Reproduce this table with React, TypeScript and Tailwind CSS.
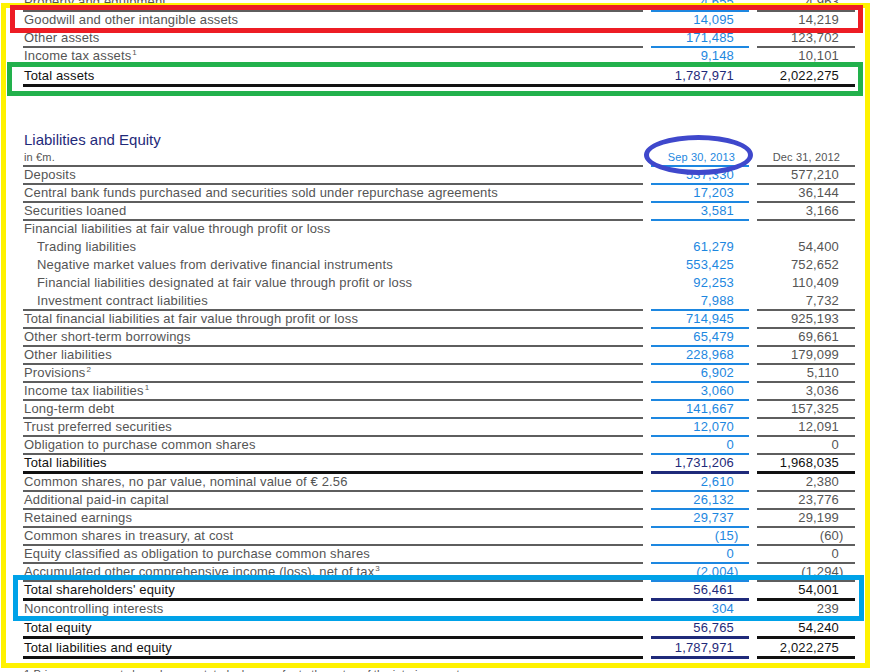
type Line = "none" | "thin" | "thick";

type Row = {
  label: string;
  sup?: string;
  a?: string;
  b?: string;
  total?: boolean;
  sub?: boolean;
  line?: Line;
  pt?: boolean;
};

const assetRows: Row[] = [
  { label: "Property and equipment", a: "4,655", b: "4,963" },
  { label: "Goodwill and other intangible assets", a: "14,095", b: "14,219" },
  { label: "Other assets", a: "171,485", b: "123,702" },
  { label: "Income tax assets", sup: "1", a: "9,148", b: "10,101" },
];

const liabilityRows: Row[] = [
  { label: "Deposits", a: "537,330", b: "577,210" },
  {
    label: "Central bank funds purchased and securities sold under repurchase agreements",
    a: "17,203",
    b: "36,144",
  },
  { label: "Securities loaned", a: "3,581", b: "3,166" },
  { label: "Financial liabilities at fair value through profit or loss", line: "none" },
  { label: "Trading liabilities", a: "61,279", b: "54,400", sub: true, line: "none" },
  {
    label: "Negative market values from derivative financial instruments",
    a: "553,425",
    b: "752,652",
    sub: true,
    line: "none",
  },
  {
    label: "Financial liabilities designated at fair value through profit or loss",
    a: "92,253",
    b: "110,409",
    sub: true,
    line: "none",
  },
  { label: "Investment contract liabilities", a: "7,988", b: "7,732", sub: true },
  { label: "Total financial liabilities at fair value through profit or loss", a: "714,945", b: "925,193" },
  { label: "Other short-term borrowings", a: "65,479", b: "69,661" },
  { label: "Other liabilities", a: "228,968", b: "179,099" },
  { label: "Provisions", sup: "2", a: "6,902", b: "5,110" },
  { label: "Income tax liabilities", sup: "1", a: "3,060", b: "3,036" },
  { label: "Long-term debt", a: "141,667", b: "157,325" },
  { label: "Trust preferred securities", a: "12,070", b: "12,091" },
  { label: "Obligation to purchase common shares", a: "0", b: "0" },
  { label: "Total liabilities", a: "1,731,206", b: "1,968,035", total: true, line: "thick" },
  { label: "Common shares, no par value, nominal value of € 2.56", a: "2,610", b: "2,380" },
  { label: "Additional paid-in capital", a: "26,132", b: "23,776" },
  { label: "Retained earnings", a: "29,737", b: "29,199" },
  { label: "Common shares in treasury, at cost", a: "(15)", b: "(60)" },
  { label: "Equity classified as obligation to purchase common shares", a: "0", b: "0" },
  {
    label: "Accumulated other comprehensive income (loss), net of tax",
    sup: "3",
    a: "(2,004)",
    b: "(1,294)",
  },
  { label: "Total shareholders' equity", a: "56,461", b: "54,001", total: true, line: "thick" },
  { label: "Noncontrolling interests", a: "304", b: "239" },
  { label: "Total equity", a: "56,765", b: "54,240", total: true, line: "thick", pt: true },
  { label: "Total liabilities and equity", a: "1,787,971", b: "2,022,275", total: true, line: "thick", pt: true },
];

const labelLine = {
  none: "border-b-2 border-transparent",
  thin: "border-b-2 border-[#5e5e5e]",
  thick: "border-b-[3px] border-[#111]",
};

const blueLine = {
  none: "border-b-2 border-transparent",
  thin: "border-b-2 border-[#1d87e0]",
  thick: "border-b-[3px] border-[#1f2a7a]",
};

const rightLine = {
  none: "border-b-2 border-transparent",
  thin: "border-b-2 border-[#5e5e5e]",
  thick: "border-b-[3px] border-[#111]",
};

function Num({ v }: { v?: string }) {
  if (!v) return null;
  if (v.endsWith(")")) {
    return (
      <span>
        {v.slice(0, -1)}
        <span className="inline-block w-0">)</span>
      </span>
    );
  }
  return <span>{v}</span>;
}

function TableRow({ row }: { row: Row }) {
  const line = row.line ?? "thin";
  return (
    <div className="flex gap-2">
      <div
        className={`w-[620px] leading-[16px] pl-[1px] ${row.pt ? "pt-[1px]" : ""} ${
          row.sub ? "pl-[14px]" : ""
        } ${row.total ? "text-[#111]" : "text-[#555]"} ${labelLine[line]}`}
      >
        {row.label}
        {row.sup && <sup className="text-[8px] leading-none ml-[1px] -top-[5px]">{row.sup}</sup>}
      </div>
      <div
        className={`w-[98px] leading-[16px] pr-[15px] text-right ${row.pt ? "pt-[1px]" : ""} ${
          row.total ? "text-[#1f2a7a]" : "text-[#1d87e0]"
        } ${blueLine[line]}`}
      >
        <Num v={row.a} />
      </div>
      <div
        className={`w-[98px] leading-[16px] pr-[16px] text-right ${row.pt ? "pt-[1px]" : ""} ${
          row.total ? "text-[#111]" : "text-[#555]"
        } ${rightLine[line]}`}
      >
        <Num v={row.b} />
      </div>
    </div>
  );
}

export default function App() {
  return (
    <div className="relative w-[870px] h-[672px] overflow-hidden bg-white font-['Liberation_Sans',Arial,sans-serif] text-[13px] tracking-[0.15px]">
      <div className="pl-[23px] -mt-[6px]">
        {assetRows.map((row) => (
          <TableRow key={row.label} row={row} />
        ))}

        {/* total assets: one continuous rule under all three columns */}
        <div className="flex gap-2 w-[832px] pt-[2px] border-b-[3px] border-[#111] leading-[16px]">
          <div className="w-[620px] pl-[1px] text-[#111]">Total assets</div>
          <div className="w-[98px] pr-[15px] text-right text-[#1f2a7a]">1,787,971</div>
          <div className="w-[98px] pr-[16px] text-right text-[#111]">2,022,275</div>
        </div>

        <h2 className="mt-[44px] pl-[1px] text-[15px] leading-[18px] tracking-normal text-[#1f2a7a]">
          Liabilities and Equity
        </h2>

        <div className="flex gap-2 mt-[1px] text-[11px] leading-[15px]">
          <div className="w-[620px] pl-[1px] text-[#555] border-b-2 border-[#5e5e5e]">in €m.</div>
          <div className="w-[98px] pr-[14px] text-right text-[#1d87e0] border-b-2 border-[#1d87e0]">
            Sep 30, 2013
          </div>
          <div className="w-[98px] pr-[15px] text-right text-[#555] border-b-2 border-[#5e5e5e]">
            Dec 31, 2012
          </div>
        </div>

        {liabilityRows.map((row) => (
          <TableRow key={row.label} row={row} />
        ))}

        <p className="mt-[8px] pl-[1px] text-[11px] leading-[14px] text-[#555]">
          1 Prior year amounts have been restated, please refer to the notes of the interim report.
        </p>
      </div>

      {/* hand-drawn highlight marks over the statement */}
      <div className="absolute left-[1px] top-[3px] w-[869px] h-[665px] border-[5px] border-[#fff200]" />
      <div className="absolute left-[10px] top-[5px] w-[853px] h-[28px] border-[5px] border-[#ed1c24]" />
      <div className="absolute left-[7px] top-[62px] w-[856px] h-[34px] border-[5px] border-[#22b14c]" />
      <div className="absolute left-[13px] top-[575px] w-[851px] h-[46px] border-[5px] border-[#00a2e8]" />
      <div className="absolute left-[644px] top-[135px] w-[109px] h-[40px] rounded-[50%] border-[5px] border-[#3f48cc]" />
    </div>
  );
}
